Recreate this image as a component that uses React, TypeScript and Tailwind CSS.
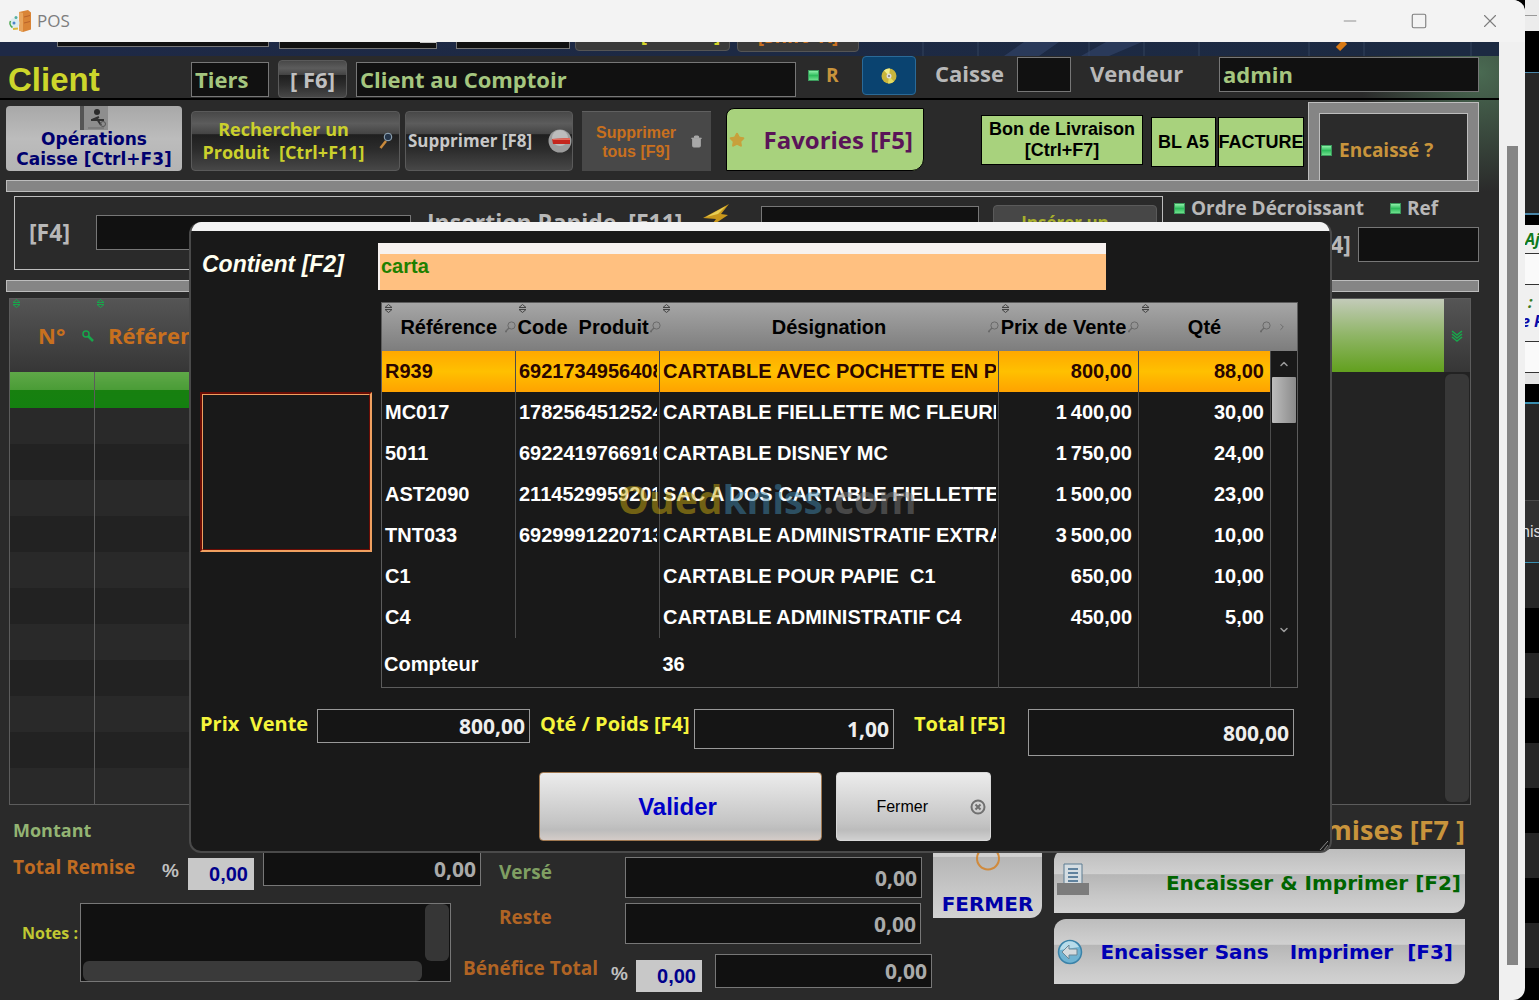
import React from 'react';
import { ChevronDown, ChevronUp, Minus, Square, X, Trash2, Star } from 'lucide-react';

interface Product {
    ref: string;
    code: string;
    name: string;
    price: string;
    qty: string;
}

const PRODUCTS: Product[] = [
    { ref: 'R939', code: '6921734956408', name: 'CARTABLE AVEC POCHETTE EN PVC', price: '800,00', qty: '88,00' },
    { ref: 'MC017', code: '1782564512524', name: 'CARTABLE FIELLETTE MC FLEURES', price: '1\u2009400,00', qty: '30,00' },
    { ref: '5011', code: '6922419766916', name: 'CARTABLE DISNEY MC', price: '1\u2009750,00', qty: '24,00' },
    { ref: 'AST2090', code: '2114529959201', name: 'SAC A DOS CARTABLE FIELLETTE', price: '1\u2009500,00', qty: '23,00' },
    { ref: 'TNT033', code: '6929991220713', name: 'CARTABLE ADMINISTRATIF EXTRAV', price: '3\u2009500,00', qty: '10,00' },
    { ref: 'C1', code: '', name: 'CARTABLE POUR PAPIE  C1', price: '650,00', qty: '10,00' },
    { ref: 'C4', code: '', name: 'CARTABLE ADMINISTRATIF C4', price: '450,00', qty: '5,00' },
];

const COLUMNS = [
    { title: 'Référence', pad: 'pl-3' },
    { title: 'Code  Produit', pad: 'pl-[2px]' },
    { title: 'Désignation', pad: 'pl-3' },
    { title: 'Prix de Vente', pad: 'pl-[2px]' },
    { title: 'Qté', pad: 'pl-3' },
];

const field = 'min-w-0 border border-[#777777] bg-[#111111] px-[3px] outline-none';
const amount = 'min-w-0 border border-[#777777] bg-[#111111] px-1 text-right text-[21px] font-bold text-[#aaaaaa] outline-none';
const percent = 'h-8 w-[66px] bg-[#c8c8c8] px-[6px] text-right font-["Liberation_Sans"] text-[20px] font-bold text-[#00008b] outline-none';
const glossy = 'rounded-sm border border-[#5a5a5a] bg-[linear-gradient(#484848,#5c5c5c_20%,#444444_38%,#1f1f1f_39%,#2c2c2c_65%,#474747)]';
const silver = 'bg-[linear-gradient(#bdbdbd,#d0d0d0_39%,#b6b6b6_40%,#c8c8c8_75%,#d2d2d2)]';
const greenBtn = 'border border-black bg-[#a8d27d] font-["Liberation_Sans"] text-[18px] leading-[21px] font-bold text-black';

function Check({ label, className = '', defaultChecked = true }: { label: string; className?: string; defaultChecked?: boolean }) {
    return (
        <label className={`flex items-center ${className}`}>
            <input
                type="checkbox"
                defaultChecked={defaultChecked}
                className="size-[11px] shrink-0 appearance-none border border-[#3c9a5c] bg-[linear-gradient(#8df0a8,#2fbd5d_50%,#6fe08d)]"
            />
            <span>{label}</span>
        </label>
    );
}

function SortMark({ className = '' }: { className?: string }) {
    return (
        <svg viewBox="0 0 9 9" className={`size-[9px] ${className}`} fill="none" stroke="currentColor">
            <path d="M1 3.500 4.500.5 8 3.500zM1 5.500h7L4.500 8.500z" />
        </svg>
    );
}

function Loupe() {
    return (
        <svg viewBox="0 0 12 12" className="size-3 shrink-0" fill="none" stroke="#6a6a6a">
            <circle cx="7.5" cy="4.5" r="3.6" />
            <path d="M5 7 1.5 10.5M1 10.5h2" strokeWidth="1.4" />
        </svg>
    );
}

function TitleBar() {
    return (
        <header className="flex h-[42px] items-center bg-[#f3f3f3] pl-[9px] font-['Open_Sans'] text-[17px] text-[#7d7d7d]">
            <svg viewBox="0 0 24 24" className="mr-1 size-6">
                <path d="M10 3 19 1l3 2.500v17L14 23l-4-1.500z" fill="#d98436" />
                <path d="M10 3l4 1v19l-4-1.500z" fill="#e8a55c" />
                <path d="M15 8l6-1.500M15 14l6-1.500" stroke="#b9622a" />
                <circle cx="5.500" cy="14" r="5" fill="#dcecee" />
                <path d="M1.500 12a5 5 0 0 0 2 6.500" stroke="#4fa84f" strokeWidth="1.500" fill="none" />
                <path d="M4 20l5-.5" stroke="#d9b93a" strokeWidth="2" />
                <circle cx="7" cy="8.500" r="1.500" fill="#55b0a0" />
                <circle cx="5" cy="14" r="1.500" fill="#4a86c8" />
            </svg>
            <span className="flex-1">POS</span>
            <button aria-label="Réduire" className="mr-[50px]"><Minus className="size-5" strokeWidth={1} /></button>
            <button aria-label="Agrandir" className="mr-[51px]"><Square className="size-[18px]" strokeWidth={1.5} /></button>
            <button aria-label="Fermer la fenêtre" className="mr-6"><X className="size-[22px]" strokeWidth={1.2} /></button>
        </header>
    );
}

/* Bottom edge of the scrolled-out filter bar */
function FilterStrip() {
    return (
        <div className="flex h-[14px] items-end overflow-hidden bg-[linear-gradient(90deg,#1e2946,#1c2a42)] pl-[57px]">
            <div className="mb-[9px] h-7 w-[212px] border border-[#777777] bg-[#111111]" />
            <div className="mb-[7px] ml-[10px] flex h-7 w-[158px] items-center justify-end border border-[#777777] bg-[#111111]">
                <span className="mb-1 h-5 w-4 bg-[#c8c8c8]" />
            </div>
            <div className="mb-[7px] ml-[19px] h-7 w-[114px] border border-[#777777] bg-[#111111]" />
            <button className="mb-[5px] ml-[5px] h-8 w-[155px] shrink-0 rounded-sm border border-[#555555] bg-[#3a3a3a] pl-14 text-[19px] leading-[18px] font-bold text-[#d5d52a]">[Ctrl+F4]</button>
            <button className="mb-1 ml-[7px] h-8 w-[122px] shrink-0 rounded-sm border border-[#555555] bg-[#3a3a3a] text-[19px] leading-[18px] font-bold text-[#c8701e]">[Shift+X]</button>
            <svg viewBox="0 0 640 14" className="ml-auto h-[14px] w-[640px]" preserveAspectRatio="xMaxYMin slice">
                <path d="M64 0v14M119 0v14M230 0v14M285 0v14M340 0v14M450 0v14M505 0v14M612 0v14" stroke="#33435c" />
                <path d="M145 14 165 0h35l-20 14zM222 14 247 0h36l-33 14z" fill="#33466b" opacity=".6" />
                <path d="M479 7 486 0" stroke="#d97a15" strokeWidth="6" />
            </svg>
        </div>
    );
}

function ClientRow() {
    return (
        <section className="flex h-11 items-start border-b-2 border-black pl-2 text-[22px] leading-[30px] font-bold text-[#b8b8b8]">
            <h1 className="mt-1 w-[183px] font-['Liberation_Sans'] text-[33px] leading-[40px] font-bold text-[#cdd62b]">Client</h1>
            <input aria-label="Tiers" defaultValue="Tiers" className={`${field} mt-[6px] h-[35px] w-[78px] pb-[2px] text-[#a5c67f]`} />
            <button className={`${glossy} mt-1 ml-[9px] h-[38px] w-[69px] text-[#c0c0c0]`}>[ F6]</button>
            <input aria-label="Nom du client" defaultValue="Client au Comptoir" className={`${field} mt-[6px] ml-[9px] h-[35px] flex-1 pb-[2px] text-[#a5c67f]`} />
            <Check label="R" className="mt-1 ml-3 w-[54px] gap-[7px] text-[19px] leading-[30px] text-[#c8943c]" />
            <button aria-label="Disque" className="flex h-[39px] w-[54px] items-center justify-center rounded border border-[#2a6a98] bg-[#0a4370]">
                <svg viewBox="0 0 16 16" className="size-4">
                    <circle cx="8" cy="8" r="7.500" fill="#c9b53c" />
                    <path d="M8 8 3 2.500A7.500 7.500 0 0 1 9 .6z" fill="#f2ee8a" />
                    <path d="M8 8l5 5.500A7.500 7.500 0 0 1 7 15.400z" fill="#e5dc60" />
                    <circle cx="8" cy="8" r="2.500" fill="#dddddd" />
                    <circle cx="8" cy="8" r="1" fill="#777777" />
                </svg>
            </button>
            <label htmlFor="caisse" className="mt-[2px] ml-[19px] w-[82px]">Caisse</label>
            <input id="caisse" className={`${field} mt-px h-[35px] w-[54px]`} />
            <label htmlFor="vendeur" className="mt-[2px] ml-[19px] w-[129px]">Vendeur</label>
            <input id="vendeur" defaultValue="admin" className={`${field} mt-px mr-5 h-[35px] w-[260px] pb-[2px] text-[#a5c67f]`} />
        </section>
    );
}

function Toolbar() {
    return (
        <section className="flex h-20 items-end pr-5 pl-[6px] text-[17px] font-bold">
            <div className="flex flex-1 items-end pb-[9px]">
                <button className="flex h-[65px] w-44 flex-col items-center rounded bg-[linear-gradient(#a8a8a8,#bcbcbc_50%,#b4b4b4)] font-['DejaVu_Sans'] text-[17px] leading-5 font-bold text-[#00006e]">
                    <svg viewBox="0 0 28 24" className="h-6 w-7 shrink-0">
                        <path d="M0 0h28v24H4z" fill="#8e8e8e" />
                        <path d="M0 0h4v24H0z" fill="#555555" />
                        <circle cx="17" cy="6" r="3" fill="#2b2b2b" />
                        <path d="M11 14h13M19 11l-7 3M17 13l4 6" stroke="#333333" strokeWidth="2" fill="none" />
                        <circle cx="23" cy="18" r="2.500" fill="none" stroke="#555555" />
                        <path d="M8 22h16" stroke="#6a6a6a" />
                    </svg>
                    <span className="-mt-px">Opérations<br />Caisse [Ctrl+F3]</span>
                </button>
                <button className={`${glossy} ml-[9px] flex h-[60px] w-[209px] items-center justify-end pr-[6px] text-[18px] leading-[23px] text-[#cbd02c]`}>
                    <span className="flex-1 whitespace-pre">{'Rechercher un\nProduit  [Ctrl+F11]'}</span>
                    <svg viewBox="0 0 14 18" className="ml-1 h-[18px] w-[14px]">
                        <path d="M7 9 1.500 16" stroke="#c98a3c" strokeWidth="2.500" />
                        <circle cx="9" cy="5" r="3.800" fill="#26364a" stroke="#9ab0c0" />
                    </svg>
                </button>
                <button className={`${glossy} ml-[5px] flex h-[60px] w-[168px] items-center justify-between pl-[2px] text-[#c8c8c8]`}>
                    <span>Supprimer [F8]</span>
                    <svg viewBox="0 0 24 24" className="size-6">
                        <circle cx="12" cy="12" r="11.500" fill="#9c9c9c" />
                        <circle cx="12" cy="9" r="8" fill="#bcbcbc" />
                        <path d="M4 10l18-1v6H5z" fill="#c4261d" />
                        <path d="M4 10l18-1v2H5z" fill="#e26a5c" />
                    </svg>
                </button>
                <button className="ml-[9px] flex h-[60px] w-[129px] items-center border-t border-[#606060] bg-[#484848] pl-[14px] font-['Liberation_Sans'] text-[16px] leading-[19px] font-bold text-[#c8701e]">
                    <span className="mr-[14px]">Supprimer<br />tous [F9]</span>
                    <Trash2 className="size-[13px] text-[#a8a8a8]" fill="#a8a8a8" />
                </button>
                <button className="ml-[15px] flex h-[63px] w-[198px] items-center justify-between rounded-tl-lg rounded-br-xl border border-black bg-[#a8d27d] pr-[10px] pl-[2px] text-[24px] text-[#5a1458]">
                    <Star className="size-4 text-[#c8a03c]" fill="currentColor" />
                    <span>Favories [F5]</span>
                </button>
                <button className={`${greenBtn} mb-[6px] ml-auto h-[50px] w-[162px]`}>Bon de Livraison<br />[Ctrl+F7]</button>
                <button className={`${greenBtn} mb-1 ml-2 h-[50px] w-[65px] whitespace-nowrap`}>BL A5</button>
                <button className={`${greenBtn} mr-1 mb-1 ml-[2px] flex h-[50px] w-[86px] items-center justify-center overflow-hidden`}>FACTURE</button>
            </div>
            <div className="h-[78px] w-[171px] border border-b-0 border-[#bdbdbd] bg-[#858585] px-[10px] pt-[10px]">
                <div className="flex h-full items-center border border-b-0 border-[#bdbdbd] bg-[#2b2b2b] text-[#c8943c]">
                    <Check label="Encaissé ?" className="mt-[6px] ml-px gap-[7px] text-[19px]" />
                </div>
            </div>
        </section>
    );
}

function Rule() {
    return <div className="mr-5 ml-[6px] h-3 border border-[#bdbdbd] bg-[#858585]" />;
}

function InsertionRow() {
    return (
        <section className="my-1 mr-5 ml-[14px] flex h-20 text-[23px] font-bold text-[#b8b8b8]">
            <div className="flex h-[74px] flex-1 items-start border border-[#bdbdbd] pl-[14px]">
                <label htmlFor="code" className="mt-[18px] w-[67px]">[F4]</label>
                <input id="code" className={`${field} mt-[18px] h-[35px] w-[315px]`} />
                <span className="mt-2 ml-4 w-[275px] whitespace-pre">Insertion Rapide  [F11]</span>
                <svg viewBox="0 0 28 24" className="mt-[7px] h-6 w-7">
                    <path d="M1 14 27 0 19 10l7 1L8 23l6-8z" fill="#c9981c" />
                    <path d="M4 13 24 2 16 10z" fill="#e8cf55" />
                </svg>
                <input aria-label="Insertion rapide" className={`${field} mt-[9px] ml-auto h-[35px] w-[218px]`} />
                <button className="mt-2 mr-[5px] ml-[14px] h-14 w-[164px] rounded-sm border border-[#5a5a5a] bg-[#474747] pr-5 text-[17px] leading-5 text-[#a8b02c]">Insérer un<br />Produit</button>
            </div>
            <div className="w-[316px] text-[19px]">
                <div className="flex h-[25px] items-center pl-[11px]">
                    <Check label="Ordre Décroissant" className="w-[216px] gap-[6px]" />
                    <Check label="Ref" className="gap-[6px]" />
                </div>
                <div className="mt-[6px] flex items-center justify-end gap-[7px] text-[23px]">
                    <label htmlFor="recherche" className="leading-[35px]">[F4]</label>
                    <input id="recherche" className={`${field} h-[35px] w-[121px]`} />
                </div>
            </div>
        </section>
    );
}

function TicketTable() {
    return (
        <section className="mt-[6px] mr-7 ml-[9px] flex h-[507px] border border-[#5c5c5c]">
            <table className="h-full flex-1 table-fixed border-collapse">
                <colgroup>
                    <col className="w-[84px]" />
                    <col />
                    <col className="w-[400px]" />
                </colgroup>
                <thead>
                    <tr className="h-[73px] bg-[linear-gradient(#555555,#363636)] text-left text-[22px] text-[#c8701e]">
                        <th className="relative pl-7 font-bold">
                            <SortMark className="absolute top-0 left-[2px] text-[#17a84b]" />
                            <span className="flex items-center justify-between">N°
                                <svg viewBox="0 0 12 12" className="size-3" fill="none" stroke="#17a84b" strokeWidth="1.500">
                                    <circle cx="4" cy="4" r="3" />
                                    <path d="M6 6l5 5" strokeWidth="2.500" />
                                </svg>
                            </span>
                        </th>
                        <th className="relative pl-[14px] font-bold">
                            <SortMark className="absolute top-0 left-[2px] text-[#17a84b]" />
                            Référence
                        </th>
                        <th className="bg-[linear-gradient(#c3cbb9,#8fb566_50%,#62a01e)]" />
                    </tr>
                </thead>
                <tbody>
                    <tr className="h-9">
                        <td className="border-r border-[#5c5c5c] bg-[linear-gradient(#5fa848,#4a9c36_50%,#17800f_51%,#148010)]" />
                        <td className="bg-[linear-gradient(#5fa848,#4a9c36_50%,#17800f_51%,#148010)]" />
                        <td className="bg-[#232323]" />
                    </tr>
                    {Array.from({ length: 11 }, (_, i) => (
                        <tr key={i} className="h-9 odd:bg-[#222222] even:bg-[#292929]">
                            <td className="border-r border-[#5c5c5c]" />
                            <td />
                            <td className="bg-[#232323]" />
                        </tr>
                    ))}
                </tbody>
            </table>
            <div className="flex w-[26px] flex-col bg-[#222222]">
                <div className="flex h-[73px] items-center justify-center bg-[linear-gradient(#555555,#363636)]">
                    <svg viewBox="0 0 12 12" className="size-3" fill="none" stroke="#17a84b" strokeWidth="1.500">
                        <path d="M1 1l5 4 5-4M1 4l5 4 5-4M1 7l5 4 5-4" />
                    </svg>
                </div>
                <div className="mx-px my-[2px] flex-1 rounded-md bg-[#383838]" />
            </div>
        </section>
    );
}

function TotalsPanel() {
    return (
        <section className="flex pt-3 text-[19px] font-bold">
            <div className="min-w-0 flex-1">
                <div className="h-[26px] pl-[13px] text-[18px] leading-[26px] text-[#93b473]">Montant</div>
                <div className="mt-2 flex items-start">
                    <label htmlFor="remise" className="mt-[2px] w-[150px] pl-[13px] whitespace-nowrap text-[#c06c22]">Total Remise</label>
                    <span className="mt-[6px] w-[38px] pl-3 font-['Liberation_Sans'] text-[#c0c0c0]">%</span>
                    <input aria-label="Remise %" defaultValue="0,00" className={`${percent} mt-[7px]`} />
                    <input id="remise" defaultValue="0,00" className={`${amount} ml-[9px] h-[35px] w-[218px]`} />
                    <label htmlFor="verse" className="mt-[7px] ml-[18px] w-[126px] text-[#7f9f62]">Versé</label>
                    <input id="verse" defaultValue="0,00" className={`${amount} mt-[6px] mr-[10px] h-[41px] flex-1`} />
                </div>
                <div className="mt-[5px] flex">
                    <label htmlFor="notes" className="w-20 pt-4 pl-[22px] text-[16px] leading-7 whitespace-nowrap text-[#c0c832]">Notes :</label>
                    <div className="flex h-[79px] w-[371px] flex-col border border-[#777777] bg-[#111111]">
                        <div className="flex flex-1">
                            <textarea id="notes" className="flex-1 resize-none bg-transparent outline-none" />
                            <div className="mx-px w-6 rounded-md bg-[#363636]" />
                        </div>
                        <div className="mr-7 ml-[2px] h-[25px] rounded-md bg-[#3a3a3a]" />
                    </div>
                    <div className="min-w-0 flex-1">
                        <div className="flex pr-[11px] pl-12">
                            <label htmlFor="reste" className="w-[126px] text-[#b06424]">Reste</label>
                            <input id="reste" defaultValue="0,00" className={`${amount} h-[41px] flex-1`} />
                        </div>
                        <div className="mt-[10px] flex pl-3">
                            <label htmlFor="benefice" className="w-[148px] whitespace-nowrap text-[#b06424]">Bénéfice Total</label>
                            <span className="mt-[6px] w-[25px] font-['Liberation_Sans'] text-[#c0c0c0]">%</span>
                            <input aria-label="Bénéfice %" defaultValue="0,00" className={`${percent} mt-[6px]`} />
                            <input id="benefice" defaultValue="0,00" className={`${amount} ml-[13px] h-[34px] flex-1`} />
                        </div>
                    </div>
                </div>
            </div>
            <button className={`${silver} ml-px flex h-[101px] w-[109px] flex-col items-center justify-between rounded-br-xl font-['DejaVu_Sans'] text-[20px] leading-7 font-bold text-[#0000a8]`}>
                <svg viewBox="0 0 28 54" className="h-[54px] w-7" fill="none" stroke="#d08a3c" strokeWidth="2">
                    <path d="M7 33a11 11 0 1 0 14 0M14 26v10" />
                </svg>
                FERMER
            </button>
            <div className="mr-[34px] ml-3 w-[411px] font-['DejaVu_Sans'] text-[20px] font-bold">
                <div className="h-8 text-right font-['Open_Sans'] text-[27px] leading-[26px] text-[#c8943c]">Remises [F7 ]</div>
                <button className={`${silver} flex h-16 w-full items-center justify-between rounded-tl-xl rounded-br-xl pt-1 pr-1 pl-[3px] text-[#006400]`}>
                    <svg viewBox="0 0 32 32" className="mb-2 size-8">
                        <path d="M7 1h18v20H7z" fill="#d5dde2" stroke="#5c7c92" />
                        <path d="M11 6h10M11 10h10M11 14h10M11 18h10" stroke="#3a6488" strokeWidth="1.500" />
                        <path d="M0 20h32v12H0z" fill="#7c7c7c" />
                    </svg>
                    Encaisser &amp; Imprimer [F2]
                </button>
                <button className={`${silver} mt-[6px] flex h-[65px] w-full items-center justify-between rounded-tl-xl rounded-br-xl pr-3 pl-[3px] text-[#0000b4]`}>
                    <svg viewBox="0 0 26 26" className="size-[26px]">
                        <circle cx="13" cy="13" r="11.500" fill="#6fb3d2" stroke="#3a82a8" strokeWidth="1.500" />
                        <path d="M3 11A10 10 0 0 1 22 8z" fill="#b7dcea" />
                        <path d="M5 13l7-7v4h8v6h-8v4z" fill="#d4dadd" stroke="#6a8796" />
                    </svg>
                    <span className="whitespace-pre">Encaisser Sans   Imprimer  [F3]</span>
                </button>
            </div>
        </section>
    );
}

function ProductTable() {
    return (
        <table className="w-full table-fixed border-collapse border border-[#5c5c5c] text-[20px] leading-6 font-bold text-white">
            <colgroup>
                <col className="w-[134px]" />
                <col className="w-36" />
                <col />
                <col className="w-[140px]" />
                <col className="w-[132px]" />
                <col className="w-[27px]" />
            </colgroup>
            <thead>
                <tr className="h-12 bg-[linear-gradient(#a6a6a6,#7d7d7d)] text-black">
                    {COLUMNS.map((col) => (
                        <th key={col.title} className="relative p-0">
                            <SortMark className="absolute top-px left-[2px] text-[#444444]" />
                            <span className={`flex items-center whitespace-pre ${col.pad}`}>
                                <span className="flex-1">{col.title}</span>
                                <Loupe />
                            </span>
                        </th>
                    ))}
                    <th className="p-0 text-left">
                        <ChevronDown className="ml-[6px] size-[10px] -rotate-90 text-[#666666]" />
                    </th>
                </tr>
            </thead>
            <tbody>
                {PRODUCTS.map((p, i) => (
                    <tr
                        key={p.ref}
                        className={i === 0 ? 'h-[41px] bg-[linear-gradient(#ffa800,#ffc000_50%,#ffa200)] text-[#2a0500]' : 'h-[41px]'}
                    >
                        <td className="border-r border-[#4c4c4c] p-0 pl-[3px]">{p.ref}</td>
                        <td className="border-r border-[#4c4c4c] p-0 pr-[2px] pl-[3px]">
                            <div className="overflow-hidden whitespace-nowrap">{p.code}</div>
                        </td>
                        <td className="border-r border-[#4c4c4c] p-0 pr-[2px] pl-[3px]">
                            <div className="overflow-hidden whitespace-pre">{p.name}</div>
                        </td>
                        <td className="border-r border-[#4c4c4c] p-0 pr-[6px] text-right">{p.price}</td>
                        <td className="border-r border-[#4c4c4c] p-0 pr-[6px] text-right">{p.qty}</td>
                        {i === 0 && (
                            <td rowSpan={7} className="h-[287px] bg-[#191919] p-0 align-top">
                                <div className="flex h-[287px] flex-col items-center text-[#9a9a9a]">
                                    <ChevronUp className="my-[7px] size-3" strokeWidth={3} />
                                    <div className="h-[46px] w-6 rounded-[1px] bg-[linear-gradient(90deg,#bdbdbd,#8a8a8a)]" />
                                    <ChevronDown className="mt-auto mb-[2px] size-3" strokeWidth={3} />
                                </div>
                            </td>
                        )}
                    </tr>
                ))}
            </tbody>
            <tfoot>
                <tr className="h-[50px]">
                    <td colSpan={2} className="p-0 pt-1 pl-[2px]">Compteur</td>
                    <td className="border-r border-[#4c4c4c] p-0 pt-1 pl-[3px]">36</td>
                    <td className="border-r border-[#4c4c4c]" />
                    <td className="border-r border-[#4c4c4c]" />
                    <td />
                </tr>
            </tfoot>
        </table>
    );
}

function SearchDialog() {
    const total = 'min-w-0 border border-[#999999] bg-[#151515] px-1 text-right text-[21px] font-bold text-[#eeeeee] outline-none';
    return (
        <div
            role="dialog"
            aria-label="Recherche de produit"
            className="absolute top-[222px] right-[207px] left-[189px] z-10 overflow-hidden rounded-xl border-2 border-t-0 border-[#4a4a4a] bg-[#191919] font-['Liberation_Sans']"
        >
            <div className="h-[9px] bg-[#f3f3f3]" />
            <div className="flex pt-3 pr-8 pl-[11px]">
                <div className="w-44 shrink-0">
                    <label htmlFor="contient" className="mt-[6px] block text-[23px] leading-[30px] font-bold text-[#fffff0] italic">Contient [F2]</label>
                    <div className="mt-[113px] -ml-[2px] h-[160px] w-[172px] border-2 border-t-[#6a0c04] border-r-[#f0a060] border-b-[#f0a060] border-l-[#6a0c04]">
                        <div className="h-full border border-t-[#f0a060] border-r-[#6a0c04] border-b-[#6a0c04] border-l-[#f0a060]" />
                    </div>
                </div>
                <div className="flex-1">
                    <input
                        id="contient"
                        defaultValue="carta"
                        className="mb-3 block h-[47px] w-[728px] border-t-[11px] border-l-2 border-[#f7f2f0] bg-[#ffc080] px-px pb-3 text-[20px] font-bold text-[#1f8000] outline-none"
                    />
                    <div className="ml-[3px]">
                        <ProductTable />
                    </div>
                </div>
            </div>
            <div className="mt-[21px] flex items-start pr-9 pl-[9px] font-['Open_Sans'] text-[20px] leading-[30px] font-bold text-[#f5f53c]">
                <label htmlFor="prix" className="w-[117px] whitespace-pre">Prix  Vente</label>
                <input id="prix" defaultValue="800,00" className={`${total} h-[34px] w-[213px]`} />
                <label htmlFor="qte" className="ml-[10px] w-[154px] whitespace-nowrap">Qté / Poids [F4]</label>
                <input id="qte" defaultValue="1,00" className={`${total} h-10 w-[200px]`} />
                <label htmlFor="total" className="ml-5 w-[114px]">Total [F5]</label>
                <input id="total" defaultValue="800,00" className={`${total} h-[47px] flex-1`} />
            </div>
            <div className="mt-4 mb-[10px] flex gap-[14px] pl-[348px]">
                <button className="h-[69px] w-[283px] rounded-sm border border-[#a07850] bg-[linear-gradient(#ececec,#c4c4c4_75%,#bcbcbc_85%,#d4ccc8)] text-[24px] font-bold text-[#0000c8]">
                    <span className="pr-[6px]">Valider</span>
                </button>
                <button className="flex h-[69px] w-[155px] items-center justify-end gap-[42px] rounded-sm border border-[#d8d8d8] bg-[linear-gradient(#ececec,#c4c4c4_75%,#bcbcbc_85%,#d0d0d0)] pr-1 text-[16px] text-black">
                    Fermer
                    <svg viewBox="0 0 16 16" className="size-4" fill="none" stroke="#707070">
                        <circle cx="8" cy="8" r="6.500" strokeWidth="2" />
                        <path d="M5.500 5.500l5 5M10.500 5.500l-5 5" strokeWidth="2" />
                    </svg>
                </button>
            </div>
            <svg viewBox="0 0 10 10" className="absolute right-px bottom-px size-[10px]" stroke="#8a8a8a">
                <path d="M1 10 9 1M5 10l4-5" />
            </svg>
        </div>
    );
}

/* Sliver of the window that stands behind the POS one */
function BackWindow() {
    return (
        <aside className="w-[14px] shrink-0 overflow-hidden bg-black text-[16px] whitespace-nowrap">
            <div className="flex h-[31px] items-center bg-[#ececec]"><span className="h-px w-3 bg-[#999999]" /></div>
            <div className="h-[42px] border-b border-[#4a86a8] bg-black" />
            <div className="h-[142px] border-b-2 border-[#4a86a8] bg-[#262626]" />
            <div className="h-[10px]" />
            <div className="h-[29px] border-b border-[#333333] bg-[#f0f0f0] font-['Open_Sans'] leading-[28px] font-bold text-[#0f7a1c] italic">Aj</div>
            <div className="h-[31px] border-b border-[#333333] bg-[#fafafa]" />
            <div className="h-[57px] border-b border-[#333333] bg-[#f0f0f0] pt-2 font-['Open_Sans'] leading-[19px] font-bold italic">
                <div className="pl-[3px] text-[#3a7a1c]">:</div>
                <div className="-ml-1 text-[#0a0aa8]">e P</div>
            </div>
            <div className="h-[31px] border-b border-[#333333] bg-[#fafafa]" />
            <div className="h-[11px] bg-[#e4e4e4]" />
            <div className="h-5 border-b-2 border-[#3a8fb0]" />
            <div className="h-[97px] border-b border-[#4a4a4a] bg-[#262626]" />
            <div className="-ml-1 h-[62px] border-b border-[#3a8fb0] bg-[#303030] font-['Liberation_Sans'] leading-[62px] text-[#dddddd]">nis</div>
            {Array.from({ length: 5 }, (_, i) => (
                <div key={i} className="h-[90px] border-b-[45px] border-black bg-[#262626] last:h-[45px] last:border-b-0" />
            ))}
        </aside>
    );
}

export default function App() {
    return (
        <div className="relative flex min-h-screen overflow-hidden bg-black font-['Open_Sans',sans-serif]">
            <main className="flex min-w-0 flex-1 flex-col overflow-hidden rounded-tr-xl rounded-br-xl bg-[#f0f0f0]">
                <TitleBar />
                <div className="flex flex-1">
                    <div className="min-w-0 flex-1 bg-[#2a2a2a] bg-[radial-gradient(circle_at_1480px_30px,#4a6a52_0,#2a2a2a00_120px)]">
                        <FilterStrip />
                        <ClientRow />
                        <Toolbar />
                        <Rule />
                        <InsertionRow />
                        <Rule />
                        <TicketTable />
                        <TotalsPanel />
                    </div>
                    <div className="flex w-[26px] flex-col pt-[104px] pr-[7px] pb-[35px] pl-2">
                        <div className="flex-1 bg-[#858585]" />
                    </div>
                </div>
            </main>
            <BackWindow />
            <SearchDialog />
            <div className="pointer-events-none absolute top-[474px] left-[618px] z-20 text-[39px] leading-[50px] font-bold opacity-50">
                <span className="text-[#c9a810]">Oued</span>
                <span className="text-[#3f86ab]">kniss</span>
                <span className="text-[#777777]">.com</span>
            </div>
        </div>
    );
}
